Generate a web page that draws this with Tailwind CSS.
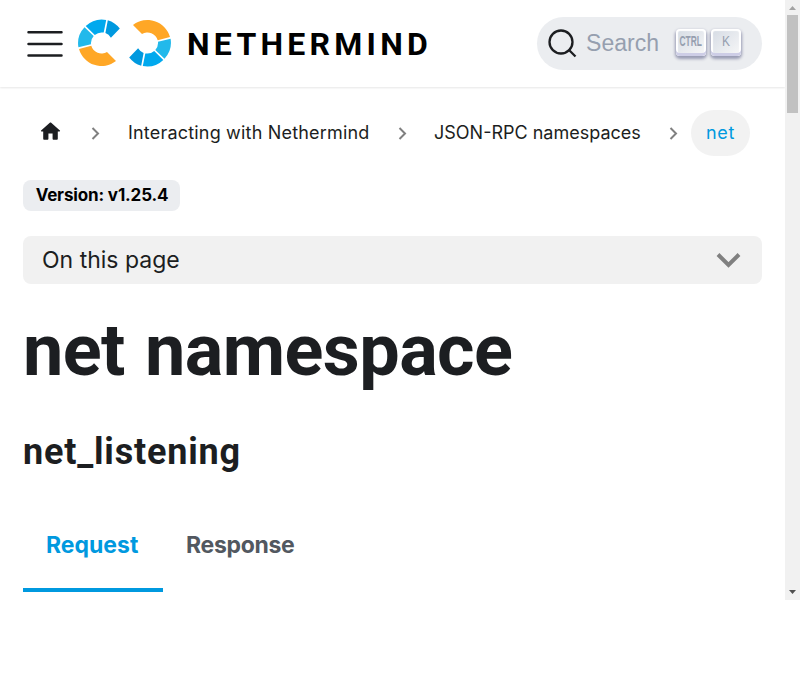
<!DOCTYPE html>
<html lang="en"><head><meta charset="utf-8"><title>net namespace</title>
<script src="https://cdn.jsdelivr.net/npm/@tailwindcss/browser@4"></script></head>
<body class="overflow-hidden bg-white font-['Inter',sans-serif] text-[#1c1e21]">
<div class="flex h-[600px] w-[800px] overflow-hidden">
<div class="w-[785px] shrink-0">
<nav class="flex h-[87px] items-center pr-[23px] pl-[27px] shadow-[0_1px_2px_rgba(0,0,0,0.1)]">
<svg class="h-[30px] w-[36px] shrink-0" viewBox="0 0 36 30" fill="none" stroke="#1c1e21" stroke-width="2.5" stroke-linecap="round"><path d="M1.500 3.300h33M1.500 15h33M1.500 26.500h33"/></svg>
<svg class="mb-px ml-[14px] h-12 w-[95px] shrink-0" viewBox="77 19.5 95 48"><defs><g id="arc">
<path fill="#ffa726" d="M79 49.400A23.500 23.500 0 0 0 116 61.600L107 52.400A10.500 10.500 0 0 1 91.300 46.300Z"/>
<path fill="#22b9eb" d="M78.400 47.800A23.500 23.500 0 0 1 84.500 27.800L93.700 36.600A10.500 10.500 0 0 0 91 44.700Z"/>
<path fill="#00a9ee" d="M85.700 26.600A23.500 23.500 0 0 1 106.200 20.400L103.700 33.100A10.500 10.500 0 0 0 94.800 35.500Z"/>
<path fill="#0099df" d="M107.800 20.700A23.500 23.500 0 0 1 119.800 29L110.900 38.200A10.500 10.500 0 0 0 105.400 33.600Z"/></g></defs>
<use href="#arc"/><use href="#arc" transform="rotate(180 124.5 43.5)"/></svg>
<div class="ml-[15px] font-['Roboto',sans-serif] text-[32px] leading-none font-bold tracking-[4.25px] whitespace-nowrap text-black">NETHERMIND</div>
<button class="ml-auto flex h-[53px] w-[225px] items-center rounded-full bg-[#ebedf0] pl-[11px]">
<svg class="size-[29px] shrink-0" viewBox="0 0 29 29" fill="none" stroke="#1c1e21" stroke-width="2.3"><circle cx="13" cy="13" r="11.500"/><path d="M20.500 20.500l7 7"/></svg>
<span class="ml-[9px] w-[73px] font-['Liberation_Sans',sans-serif] text-[23px] text-[#969faf]">Search</span>
<span class="mb-[3px] ml-[17px] flex h-[27px] w-[30px] items-center justify-center rounded-[4px] bg-linear-to-br from-[#d5dbe4] to-[#f8f8f8] pb-[2px] font-['Liberation_Sans',sans-serif] text-[14px] font-bold text-[#969faf] shadow-[inset_0_-3px_0_#cdcde6,inset_0_0_1px_2px_#fff,0_2px_3px_1px_rgba(30,35,90,0.4)]"><span class="inline-block scale-x-[.6]">CTRL</span></span>
<span class="mb-[3px] ml-[5px] flex h-[27px] w-[30px] items-center justify-center rounded-[4px] bg-linear-to-br from-[#d5dbe4] to-[#f8f8f8] pb-[2px] font-['Liberation_Sans',sans-serif] text-[15px] text-[#969faf] shadow-[inset_0_-3px_0_#cdcde6,inset_0_0_1px_2px_#fff,0_2px_3px_1px_rgba(30,35,90,0.4)]"><span class="inline-block scale-x-[.8]">K</span></span>
</button></nav>
<main class="px-[23px] pt-[23px]">
<div class="flex h-[46px] items-center text-[18px] whitespace-nowrap">
<svg class="mb-1 ml-[15px] size-[25px]" viewBox="0 0 24 24" fill="#1c1e21"><path d="M10 19v-5h4v5c0 .55.45 1 1 1h3c.55 0 1-.45 1-1v-7h1.700c.46 0 .68-.57.33-.87L12.670 3.600c-.38-.34-.96-.34-1.340 0l-8.360 7.530c-.34.3-.13.870.33.870H5v7c0 .55.45 1 1 1h3c.55 0 1-.45 1-1z"/></svg>
<svg class="ml-[28px] h-[13px] w-[9px]" viewBox="0 0 9 13" fill="none" stroke="#808080" stroke-width="2"><path d="M1.500 1l5.500 5.500L1.500 12"/></svg>
<span class="ml-[28px] w-[242px] pb-0.5 tracking-[0.19px]">Interacting with Nethermind</span>
<svg class="ml-[28px] h-[13px] w-[9px]" viewBox="0 0 9 13" fill="none" stroke="#808080" stroke-width="2"><path d="M1.500 1l5.500 5.500L1.500 12"/></svg>
<span class="ml-[27px] w-[208px] pb-0.5">JSON-RPC namespaces</span>
<svg class="ml-[27px] h-[13px] w-[9px]" viewBox="0 0 9 13" fill="none" stroke="#808080" stroke-width="2"><path d="M1.500 1l5.500 5.500L1.500 12"/></svg>
<span class="mr-3 ml-auto flex h-full w-[59px] items-center justify-center rounded-[23px] bg-[#f2f2f2] pb-0.5 tracking-[0.7px] text-[#0099df]">net</span></div>
<div class="mt-6 flex h-[31px] w-[157px] items-center justify-center rounded-lg bg-[#ebedf0] pl-px text-[17px] font-bold tracking-[-0.15px] text-black">Version: v1.25.4</div>
<div class="mt-[25px] flex h-12 items-center rounded-lg bg-[#f1f1f1] pr-[21px] pl-[19px] text-[23px]"><span>On this page</span>
<svg class="ml-auto h-[16px] w-[25px]" viewBox="0 0 25 16" fill="none" stroke="#808080" stroke-width="4"><path d="M2 2.500l10.500 10.500L23 2.500"/></svg></div>
<h1 class="mt-[22px] font-['Roboto',sans-serif] text-[72px] leading-[90px] font-bold tracking-[-0.6px] whitespace-nowrap [word-spacing:3px]">net namespace</h1>
<h2 class="mt-[32px] font-['Roboto',sans-serif] text-[36px] leading-[48px] font-bold tracking-[0.8px]">net_listening</h2>
<div class="mt-[40px] flex h-[76px] text-[23px] font-bold">
<span class="w-[140px] border-b-4 border-[#0099df] pt-[12px] pl-[23px] text-[#0099df]">Request</span>
<span class="pt-[12px] pl-[23px] tracking-[-0.3px] text-[#525860]">Response</span></div>
</main></div>
<div class="flex w-[15px] flex-col items-center bg-[#f1f1f1]">
<svg class="h-[15px] w-[15px]" viewBox="0 0 15 15" fill="#a3a3a3"><path d="M7.500 6L11 10H4Z"/></svg>
<div class="h-[98px] w-[11px] bg-[#c1c1c1]"></div>
<svg class="mt-auto h-[15px] w-[15px]" viewBox="0 0 15 15" fill="#505050"><path d="M7.500 9L11 5H4Z"/></svg>
</div></div>
</body></html>
